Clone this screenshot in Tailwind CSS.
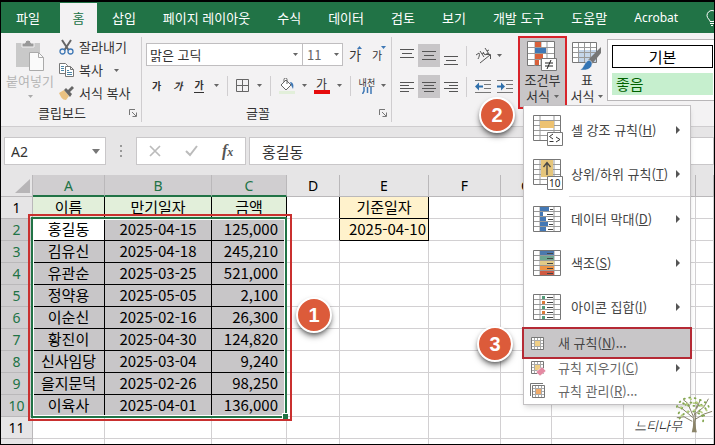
<!DOCTYPE html>
<html lang="ko">
<head>
<meta charset="utf-8">
<meta name="viewport" content="width=device-width, initial-scale=1">
<title>조건부 서식</title>
<script src="https://cdn.jsdelivr.net/npm/@tailwindcss/browser@4"></script>
</head>
<body class="h-screen overflow-hidden bg-white font-['Noto_Sans_CJK_KR',sans-serif] text-[13px] leading-4 text-[#333]">
<svg class="hidden" aria-hidden="true">
  <symbol id="arrow" viewBox="0 0 5 3"><path d="M0 0h5L2.500 3z" fill="#666"/></symbol>
  <symbol id="launcher" viewBox="0 0 8 8"><path d="M.5 6V.5H6M3 3l4 4M7.500 3.500v4h-4" fill="none" stroke="#777"/></symbol>
  <symbol id="grid" viewBox="0 0 28 26"><path d="M.5.5h27v25H.5z" fill="#fff" stroke="#777"/><path d="M7 1v24M21 1v24M1 5.500h26M1 10.500h26M1 15.500h26M1 20.500h26" stroke="#999" fill="none"/></symbol>
  <symbol id="minigrid" viewBox="0 0 13 13"><path d="M.5.5h12v12H.5z" fill="#fff" stroke="#777"/><path d="M3.500 1v11M6.500 1v11M9.500 1v11M1 3.500h11M1 6.500h11M1 9.500h11" stroke="#aaa"/><path d="M4 4h5v5H4z" fill="#f0cf86"/></symbol>
</svg>

<div class="relative flex h-full flex-col overflow-hidden border border-black border-t-2 bg-[#e6e5e6]">
  <nav class="flex h-[31px] shrink-0 items-center bg-[#217346] pl-[15px] whitespace-nowrap text-white">
    <a href="#" class="mr-5">파일</a>
    <a href="#" class="mt-px flex h-[30px] w-[37px] shrink-0 items-center justify-center bg-[#f3f2f3] text-[#217346]" aria-current="page">홈</a>
    <div class="ml-[15px] flex gap-[27px]">
      <a href="#">삽입</a><a href="#">페이지 레이아웃</a><a href="#">수식</a><a href="#">데이터</a><a href="#">검토</a><a href="#">보기</a><a href="#">개발 도구</a><a href="#">도움말</a><a href="#" class="font-['Noto_Sans',sans-serif] text-xs leading-4">Acrobat</a>
      <button aria-label="설명" class="w-[14px] shrink-0"><svg viewBox="0 0 14 16" class="h-4 w-[14px]" fill="none" stroke="#fff"><path d="M5 11.500c0-2-3-3-3-6a5 5 0 0 1 10 0c0 3-3 4-3 6zM5 13.500h4M6 15.500h2"/></svg></button>
    </div>
  </nav>

  <div class="flex h-[94px] shrink-0 overflow-hidden border-b border-[#cfcdcf] bg-[#f3f2f3] py-1 whitespace-nowrap">
    <section class="flex w-[141px] shrink-0 flex-col border-r border-[#cfcdcf]">
      <div class="flex grow">
        <button class="flex w-[54px] flex-col items-center pt-[3px] pl-1 text-[#b5b5b5]">
          <svg class="h-[31px] w-[30px]" viewBox="0 0 30 31"><path d="M1 3h24v24H1z" fill="#c9c9c9"/><path d="M7 7V3h3a3 3 0 0 1 6 0h3v4z" fill="#999" stroke="#f3f2f3"/><path d="M14.500 12.500h9l5 5v13h-14z" fill="#fafafa" stroke="#aaa"/><path d="M23.500 12.500v5h5" fill="none" stroke="#aaa"/></svg>
          <span class="mt-[2px]">붙여넣기</span>
          <svg class="mt-[6px] h-[3px] w-[5px] opacity-50"><use href="#arrow"/></svg>
        </button>
        <div class="flex flex-col gap-[7px] pt-[2px] pl-1">
          <button class="flex items-center gap-[5px]"><svg class="h-4 w-[15px]" viewBox="0 0 15 16" fill="none"><path d="M3 1l6.500 10M12 1L5.500 11" stroke="#666" stroke-width="2"/><circle cx="3.500" cy="12.500" r="2.500" stroke="#3f78b5" stroke-width="1.300"/><circle cx="11.500" cy="12.500" r="2.500" stroke="#3f78b5" stroke-width="1.300"/></svg>잘라내기</button>
          <button class="flex items-center gap-[5px]"><svg class="h-4 w-[15px]" viewBox="0 0 15 16" fill="#fff" stroke="#777"><path d="M.5 1.500h6l2 2v8h-8z"/><path d="M6.500 4.500h5l3 3v7h-8zM11.500 4.500v3h3"/><path d="M2 4.500h3M2 6.500h3M2 8.500h3M8 8.500h2M8 10.500h5M8 12.500h5" stroke="#4d86a8"/></svg>복사<svg class="ml-[6px] h-[3px] w-[5px]"><use href="#arrow"/></svg></button>
          <button class="flex items-center gap-[5px]"><svg class="h-4 w-[15px]" viewBox="0 0 15 16"><path d="M0 8l5-3 5 6-3 4c-4 0-5-3-7-7z" fill="#eac282"/><path d="M5 5l2-2 2 2 4-4 2 2-4 4 2 2-2 3z" fill="#666"/></svg>서식 복사</button>
        </div>
      </div>
      <div class="flex items-center pb-px pl-[37px]"><span class="grow">클립보드</span><button aria-label="클립보드 옵션" class="mr-1"><svg class="h-2 w-2"><use href="#launcher"/></svg></button></div>
    </section>

    <section class="flex w-[250px] shrink-0 flex-col border-r border-[#cfcdcf]">
      <div class="flex items-center pt-[6px] pl-1">
        <div class="relative"><select aria-label="글꼴" class="h-[23px] w-[157px] appearance-none border border-[#c0bec0] bg-white pl-[3px] text-[13px] leading-4"><option>맑은 고딕</option></select><svg class="pointer-events-none absolute top-[10px] right-[5px] h-[3px] w-[5px]"><use href="#arrow"/></svg></div>
        <div class="relative"><select aria-label="글꼴 크기" class="h-[23px] w-10 appearance-none border border-l-0 border-[#c0bec0] bg-white pl-1 text-[13px] leading-4 text-[#666]"><option>11</option></select><svg class="pointer-events-none absolute top-[10px] right-1 h-[3px] w-[5px]"><use href="#arrow"/></svg></div>
        <button class="relative ml-[6px] text-[13px]">가<svg class="absolute -top-px -right-px h-[3px] w-[5px]" viewBox="0 0 5 3"><path d="M0 3h5L2.500 0z" fill="#3f78b5"/></svg></button>
        <button class="relative ml-[11px] text-[11px]">가<svg class="absolute -top-px -right-1 h-[3px] w-[5px]" viewBox="0 0 5 3"><path d="M0 0h5L2.500 3z" fill="#3f78b5"/></svg></button>
      </div>
      <div class="flex grow items-center pl-[10px] text-[10px]">
        <button class="font-bold">가</button>
        <button class="ml-3 font-bold italic">가</button>
        <button class="ml-3 border-b border-[#333] font-bold leading-[14px]">가</button>
        <svg class="ml-[10px] h-[3px] w-[5px]"><use href="#arrow"/></svg>
        <span class="ml-2 h-5 w-px bg-[#d0ced0]"></span>
        <button aria-label="테두리" class="ml-2"><svg class="h-[13px] w-[13px]" viewBox="0 0 13 13" fill="none" stroke="#666"><path d="M.5.5h12v12H.5zM6.500 0v13M0 6.500h13"/></svg></button>
        <svg class="ml-2 h-[3px] w-[5px]"><use href="#arrow"/></svg>
        <span class="ml-2 h-5 w-px bg-[#d0ced0]"></span>
        <button aria-label="채우기 색" class="ml-2"><svg class="h-4 w-4" viewBox="0 0 16 16"><path d="M2 7l5-5 5 5-5 5zM5 4V1.500a1.500 1.500 0 0 1 3 0V6" fill="#fff" stroke="#666"/><path d="M11 4c3 0 4 3 3 7l-2-4z" fill="#3f78b5"/><path d="M0 13h16v3H0z" fill="#e2efda"/></svg></button>
        <svg class="ml-[7px] h-[3px] w-[5px]"><use href="#arrow"/></svg>
        <button class="ml-[7px] w-4 border-b-4 border-[#e60c0c] text-xs leading-[13px]">가</button>
        <svg class="ml-[7px] h-[3px] w-[5px]"><use href="#arrow"/></svg>
        <span class="ml-2 h-5 w-px bg-[#d0ced0]"></span>
        <button class="ml-2 flex flex-col items-center text-[9px] leading-[9px]">내천<svg class="h-[7px] w-[10px]" viewBox="0 0 10 7" fill="none" stroke="#3f78b5" stroke-width="1.500"><path d="M2 0v4l-1.500 3M5.500 0v6M9 0v7"/></svg></button>
        <svg class="ml-[6px] h-[3px] w-[5px]"><use href="#arrow"/></svg>
      </div>
      <div class="flex items-center pb-px pl-[104px]"><span class="grow">글꼴</span><button aria-label="글꼴 옵션" class="mr-1"><svg class="h-2 w-2"><use href="#launcher"/></svg></button></div>
    </section>

    <section class="flex w-[126px] shrink-0 flex-col gap-[8px] pt-[7px] pl-[4px]">
      <div class="flex h-[23px] items-center">
        <button aria-label="위쪽 맞춤" class="flex h-full w-[22px] items-center justify-center"><svg class="h-5 w-[14px]" viewBox="0 0 14 20" stroke="#555"><path d="M0 3.500h14M2 7.500h10M0 11.500h14"/></svg></button>
        <button aria-label="가운데 맞춤" class="flex h-full w-[22px] items-center justify-center bg-[#c8c6c8]"><svg class="h-5 w-[14px]" viewBox="0 0 14 20" stroke="#555"><path d="M0 5.500h14M2 9.500h10M0 13.500h14"/></svg></button>
        <button aria-label="아래쪽 맞춤" class="flex h-full w-[22px] items-center justify-center"><svg class="h-5 w-[14px]" viewBox="0 0 14 20" stroke="#555"><path d="M0 10.500h14M2 14.500h10M0 18.500h14"/></svg></button>
        <span class="ml-1 h-5 w-px bg-[#d0ced0]"></span>
        <button aria-label="방향" class="ml-2 flex items-center gap-[5px]"><svg class="h-[18px] w-[17px] overflow-visible" viewBox="0 0 17 18" fill="none" stroke="#555"><path d="M1 8l3-2c1 2 0 4-1 6M5 4l4 6M7 7l2-1M8 5l2 3 3-2M10 1l4 6M12 4l2-1"/><path d="M5 16L15 8M11 7.500h4.500V12"/></svg><svg class="h-[3px] w-[5px]"><use href="#arrow"/></svg></button>
      </div>
      <div class="flex h-[23px] items-center">
        <button aria-label="왼쪽 맞춤" class="flex h-full w-[22px] items-center justify-center"><svg class="h-3 w-[14px]" viewBox="0 0 14 12" stroke="#555"><path d="M0 1.500h14M0 4.500h9M0 7.500h14M0 10.500h9"/></svg></button>
        <button aria-label="가로 가운데 맞춤" class="flex h-full w-[22px] items-center justify-center bg-[#c8c6c8]"><svg class="h-3 w-[14px]" viewBox="0 0 14 12" stroke="#555"><path d="M0 1.500h14M2 4.500h10M0 7.500h14M2 10.500h10"/></svg></button>
        <button aria-label="오른쪽 맞춤" class="flex h-full w-[22px] items-center justify-center"><svg class="h-3 w-[14px]" viewBox="0 0 14 12" stroke="#555"><path d="M0 1.500h14M5 4.500h9M0 7.500h14M5 10.500h9"/></svg></button>
        <span class="ml-1 h-5 w-px bg-[#d0ced0]"></span>
        <button aria-label="내어쓰기" class="ml-2"><svg class="h-[13px] w-4" viewBox="0 0 16 13"><path d="M0 .5h16M9 4.500h7M9 8.500h7M0 12.500h16" stroke="#777"/><path d="M0 6.500l4-4v3h4v2H4v3z" fill="#2f6fab"/></svg></button>
        <button aria-label="들여쓰기" class="ml-[6px]"><svg class="h-[13px] w-4" viewBox="0 0 16 13"><path d="M0 .5h16M9 4.500h7M9 8.500h7M0 12.500h16" stroke="#777"/><path d="M8 6.500l-4-4v3H0v2h4v3z" fill="#2f6fab"/></svg></button>
      </div>
    </section>

    <button aria-expanded="true" class="-mt-px flex h-[73px] w-[49px] shrink-0 flex-col items-center border-2 border-[#d8232a] bg-[#c8c6c8] pt-[3px]">
      <svg class="h-[30px] w-[31px] shrink-0" viewBox="0 0 31 30"><path d="M.5.500h27v24H.5z" fill="#fff" stroke="#777"/><path d="M8 1v24M14 1v24M20 1v24M1 6.500h26M1 12.500h26M1 18.500h26" stroke="#999"/><path d="M8 1h6v5H8zM8 13h8v5H8zM8 19h4v5H8z" fill="#d9603a"/><path d="M8 7h11v5H8z" fill="#3f78b5"/><path d="M14.500 17.500h15v12h-15z" fill="#fff" stroke="#777"/><path d="M18 22h8M18 25h8M24 19l-4 9" stroke="#222"/></svg>
      <span class="mt-px">조건부</span><span class="flex items-center gap-1">서식<svg class="h-[3px] w-[5px]"><use href="#arrow"/></svg></span>
    </button>
    <button class="flex w-[40px] shrink-0 flex-col items-center pt-1">
      <svg class="h-[30px] w-[30px] shrink-0" viewBox="0 0 30 30"><path d="M.5 1.500h24v20H.5z" fill="#fff" stroke="#777"/><path d="M7 9h17v12H7z" fill="#c5d6ea"/><path d="M6.500 2v19M12.500 2v19M18.500 2v19M1 6.500h23M1 11.500h23M1 16.500h23" stroke="#999"/><path d="M29 6v6l-9 11-4-4z" fill="#777"/><path d="M17 19c3 1 4 4 2 7-3 4-8 3-11 3 4-2 4-8 9-10z" fill="#3475b5" stroke="#f3f2f3" stroke-width=".6"/></svg>
      <span class="mt-px">표</span><span class="flex items-center gap-1">서식<svg class="h-[3px] w-[5px]"><use href="#arrow"/></svg></span>
    </button>
    <div class="mt-[2px] flex h-[62px] min-w-[108px] grow flex-col gap-[5px] border border-r-0 border-[#b8b6b8] bg-white p-1 pt-[5px] pr-[2px] text-[15px]">
      <button class="flex h-[23px] shrink-0 items-center justify-center border border-black leading-5 text-black">기본</button>
      <button class="flex h-[22px] shrink-0 items-center bg-[#c6efce] pl-1 leading-5 text-[#006100]">좋음</button>
    </div>
  </div>

  <div class="flex h-[48px] shrink-0 items-center pl-[3px]">
    <div class="relative"><input aria-label="이름 상자" value="A2" class="h-[28px] w-[102px] border border-[#c9c7c9] bg-white pl-[6px] font-['Noto_Sans',sans-serif] text-sm"><svg class="pointer-events-none absolute top-3 right-[6px] h-[5px] w-2" viewBox="0 0 5 3"><path d="M0 0h5L2.500 3z" fill="#777"/></svg></div>
    <svg class="ml-[14px] h-3 w-[2px]" viewBox="0 0 2 12" fill="#999"><path d="M0 0h2v2H0zM0 5h2v2H0zM0 10h2v2H0z"/></svg>
    <div class="ml-[14px] flex h-[28px] w-[110px] items-center border border-[#c9c7c9] bg-white pl-3">
      <button aria-label="취소"><svg class="h-3 w-3" viewBox="0 0 12 12"><path d="M1 1l10 10M11 1L1 11" stroke="#bbb" stroke-width="1.700"/></svg></button>
      <button aria-label="입력" class="ml-6"><svg class="h-3 w-[13px]" viewBox="0 0 13 12"><path d="M1 6l4 4 7-9" fill="none" stroke="#bbb" stroke-width="2"/></svg></button>
      <button class="ml-6 font-['Liberation_Serif',serif] text-base leading-4 font-bold text-[#555] italic">f<span class="text-xs">x</span></button>
    </div>
    <input aria-label="수식 입력줄" value="홍길동" class="ml-[3px] h-[28px] min-w-0 grow border border-[#c9c7c9] bg-white pl-3 text-[15px]">
  </div>

  <main class="relative grow overflow-hidden bg-white">
    <table class="w-full table-fixed border-separate border-spacing-0 text-center text-[15px] leading-[19px] text-black [&_td]:h-[22px] [&_td]:border-r [&_td]:border-b [&_td]:border-[#d2d0d2] [&_td]:p-0 [&_td]:align-top [&_th]:h-[22px] [&_th]:border-r [&_th]:border-b [&_th]:border-[#bab8ba] [&_th]:p-0 [&_th]:font-['Noto_Sans',sans-serif] [&_th]:text-sm [&_th]:leading-[19px] [&_th]:font-normal">
      <colgroup><col class="w-8"><col class="w-[72px]"><col class="w-[107px]"><col class="w-[75px]"><col class="w-[53px]"><col class="w-[89px]"><col class="w-[72px]"><col class="w-[51px]"><col class="w-[72px]"><col class="w-[72px]"><col></colgroup>
      <thead><tr class="bg-[#e6e5e6] [&_.on]:border-b-2 [&_.on]:border-b-[#217346] [&_.on]:bg-[#d0ced0] [&_.on]:text-[#217346]">
        <th aria-label="모두 선택"><svg class="ml-[14px] h-[14px] w-[15px]" viewBox="0 0 15 14"><path d="M15 0v14H0z" fill="#b7b5b7"/></svg></th>
        <th scope="col" class="on">A</th><th scope="col" class="on">B</th><th scope="col" class="on">C</th><th scope="col">D</th><th scope="col">E</th><th scope="col">F</th><th scope="col">G</th><th scope="col" aria-label="H"></th><th scope="col" aria-label="I"></th><th></th>
      </tr></thead>
      <tbody class="[&_th]:bg-[#e6e5e6] [&_.h]:border-black! [&_.h]:bg-[#e2efda] [&_.s]:border-black! [&_.s]:bg-[#c8c6c8] [&_.n]:pr-2! [&_.n]:text-right [&_.y]:border-black! [&_.y]:bg-[#fff2cc] [&_.d]:border-r-black! [&_.g]:bg-[#d0ced0]! [&_.g]:text-[#217346]">
        <tr><th scope="row">1</th><td class="h">이름</td><td class="h">만기일자</td><td class="h">금액</td><td class="d"></td><td class="y">기준일자</td><td></td><td></td><td></td><td></td><td></td></tr>
        <tr><th scope="row" class="g">2</th><td class="s bg-white!">홍길동</td><td class="s">2025-04-15</td><td class="s n">125,000</td><td class="d"></td><td class="y pr-[2px]! text-right">2025-04-10</td><td></td><td></td><td></td><td></td><td></td></tr>
        <tr><th scope="row" class="g">3</th><td class="s">김유신</td><td class="s">2025-04-18</td><td class="s n">245,210</td><td></td><td></td><td></td><td></td><td></td><td></td><td></td></tr>
        <tr><th scope="row" class="g">4</th><td class="s">유관순</td><td class="s">2025-03-25</td><td class="s n">521,000</td><td></td><td></td><td></td><td></td><td></td><td></td><td></td></tr>
        <tr><th scope="row" class="g">5</th><td class="s">정약용</td><td class="s">2025-05-05</td><td class="s n">2,100</td><td></td><td></td><td></td><td></td><td></td><td></td><td></td></tr>
        <tr><th scope="row" class="g">6</th><td class="s">이순신</td><td class="s">2025-02-16</td><td class="s n">26,300</td><td></td><td></td><td></td><td></td><td></td><td></td><td></td></tr>
        <tr><th scope="row" class="g">7</th><td class="s">황진이</td><td class="s">2025-04-30</td><td class="s n">124,820</td><td></td><td></td><td></td><td></td><td></td><td></td><td></td></tr>
        <tr><th scope="row" class="g">8</th><td class="s">신사임당</td><td class="s">2025-03-04</td><td class="s n">9,240</td><td></td><td></td><td></td><td></td><td></td><td></td><td></td></tr>
        <tr><th scope="row" class="g">9</th><td class="s">을지문덕</td><td class="s">2025-02-26</td><td class="s n">98,250</td><td></td><td></td><td></td><td></td><td></td><td></td><td></td></tr>
        <tr><th scope="row" class="g">10</th><td class="s">이육사</td><td class="s">2025-04-01</td><td class="s n">136,000</td><td></td><td></td><td></td><td></td><td></td><td></td><td></td></tr>
        <tr><th scope="row">11</th><td></td><td></td><td></td><td></td><td></td><td></td><td></td><td></td><td></td><td></td></tr>
        <tr><th></th><td></td><td></td><td></td><td></td><td></td><td></td><td></td><td></td><td></td><td></td></tr>
      </tbody>
    </table>
    <div class="pointer-events-none absolute top-[42px] left-[30px] h-[201px] w-[256px] border-2 border-[#217346] shadow-[inset_0_0_0_1px_white]"><span class="absolute -right-[3px] -bottom-[3px] h-[6px] w-[6px] border-t border-l border-white bg-[#217346]"></span></div>
    <div class="pointer-events-none absolute top-[39px] left-[27px] h-[207px] w-[264px] border-2 border-[#c9302f]"></div>
  </main>

  <div role="menu" class="absolute top-[103px] left-[522px] flex w-[168px] flex-col border border-[#c3c1c3] bg-white pt-[2px] whitespace-nowrap text-[#444] shadow-md">
    <button role="menuitem" class="flex h-11 items-center pr-[10px] pl-[9px]"><svg class="h-[31px] w-[30px] shrink-0" viewBox="0 0 30 31"><use href="#grid" width="28" height="26"/><path d="M7 6h14v7H7z" fill="#edc271"/><path d="M14.500 17.500h15v13h-15z" fill="#fff" stroke="#777"/><path d="M20 19l-3.500 2.500L20 24M16.500 26.500h4M23 22l4 2.500-4 2.500" fill="none" stroke="#333"/></svg><span class="ml-2 grow text-left">셀 강조 규칙(<u>H</u>)</span><svg class="h-2 w-1" viewBox="0 0 4 8"><path d="M0 0l4 4-4 4z" fill="#555"/></svg></button>
    <button role="menuitem" class="flex h-11 items-center pr-[10px] pl-[9px]"><svg class="h-[31px] w-[30px] shrink-0" viewBox="0 0 30 31"><use href="#grid" width="28" height="26"/><path d="M8 1h12v17H8z" fill="#e5c57b"/><path d="M14 16V4M10.500 8L14 3.500 17.500 8" fill="none" stroke="#444" stroke-width="1.300"/><path d="M14.500 17.500h15v13h-15z" fill="#fff" stroke="#777"/><text x="16" y="28" font-size="10" font-family="Noto Sans" fill="#222">10</text></svg><span class="ml-2 grow text-left">상위/하위 규칙(<u>T</u>)</span><svg class="h-2 w-1" viewBox="0 0 4 8"><path d="M0 0l4 4-4 4z" fill="#555"/></svg></button>
    <hr class="ml-[45px] border-[#dad8da]">
    <button role="menuitem" class="flex h-11 items-center pr-[10px] pl-[9px]"><svg class="h-[26px] w-[30px] shrink-0" viewBox="0 0 30 26"><use href="#grid" width="28" height="26"/><path d="M7 1h9v4H7zM7 6h3v4H7zM7 11h6v4H7zM7 16h8v4H7zM7 21h6v4H7z" fill="#4478b5"/><path d="M17 3.500h3M14 8.500h6M15 13.500h5M16 18.500h4M15 23.500h5" stroke="#444"/></svg><span class="ml-2 grow text-left">데이터 막대(<u>D</u>)</span><svg class="h-2 w-1" viewBox="0 0 4 8"><path d="M0 0l4 4-4 4z" fill="#555"/></svg></button>
    <button role="menuitem" class="flex h-11 items-center pr-[10px] pl-[9px]"><svg class="h-[26px] w-[30px] shrink-0" viewBox="0 0 30 26"><use href="#grid" width="28" height="26"/><path d="M7 1h14v4H7z" fill="#4c79ad"/><path d="M7 6h14v4H7z" fill="#6da690"/><path d="M7 11h14v4H7z" fill="#e3cb87"/><path d="M7 16h14v4H7z" fill="#ee9445"/><path d="M7 21h14v4H7z" fill="#d05a42"/><path d="M14 3.500h6M14 8.500h6M14 13.500h6M14 18.500h6M14 23.500h6" stroke="#444"/></svg><span class="ml-2 grow text-left">색조(<u>S</u>)</span><svg class="h-2 w-1" viewBox="0 0 4 8"><path d="M0 0l4 4-4 4z" fill="#555"/></svg></button>
    <button role="menuitem" class="flex h-11 items-center pr-[10px] pl-[9px]"><svg class="h-[26px] w-[30px] shrink-0" viewBox="0 0 30 26"><use href="#grid" width="28" height="26"/><path d="M9 2h3v3H9zM9 12h3v3H9zM9 22h3v3H9z" fill="#529b79"/><path d="M9 7h3v3H9zM9 17h3v3H9z" fill="#dd7d3b"/><path d="M14 3.500h6M14 8.500h6M14 13.500h6M14 18.500h6M14 23.500h6" stroke="#444"/></svg><span class="ml-2 grow text-left">아이콘 집합(<u>I</u>)</span><svg class="h-2 w-1" viewBox="0 0 4 8"><path d="M0 0l4 4-4 4z" fill="#555"/></svg></button>
    <button role="menuitem" class="-mx-[2px] -mt-[2px] flex h-8 items-center border-2 border-[#b52a35] bg-[#c8c6c8] pl-[7px]"><svg class="h-[13px] w-[13px]"><use href="#minigrid"/></svg><span class="ml-[14px]">새 규칙(<u>N</u>)...</span></button>
    <button role="menuitem" class="flex h-[18px] items-center pr-[10px] pl-[7px] text-[#666]"><svg class="h-[15px] w-[15px]" viewBox="0 0 15 15"><use href="#minigrid" width="13" height="13"/><path d="M5 11l6-5 4 4-6 5z" fill="#e48aa2" stroke="#fff" stroke-width=".5"/></svg><span class="ml-3 grow text-left">규칙 지우기(<u>C</u>)</span><svg class="h-2 w-1" viewBox="0 0 4 8"><path d="M0 0l4 4-4 4z" fill="#555"/></svg></button>
    <button role="menuitem" class="flex h-[27px] items-center pl-[6px] text-[#666]"><svg class="h-[15px] w-[15px]" viewBox="0 0 15 15"><path d="M.5 13V.5H13" fill="none" stroke="#777"/><use href="#minigrid" x="2" y="2" width="13" height="13"/><path d="M6 6h5v5H6z" fill="#f1ab6a"/></svg><span class="ml-[13px]">규칙 관리(<u>R</u>)...</span></button>
  </div>

  <span class="absolute top-[95px] left-[478px] flex h-9 w-9 items-center justify-center rounded-full border-2 border-white bg-[#dc5b3a] font-['Liberation_Sans',sans-serif] text-xl font-bold text-white shadow-md shadow-black/50">2</span>
  <span class="absolute top-[295px] left-[295px] flex h-9 w-9 items-center justify-center rounded-full border-2 border-white bg-[#dc5b3a] font-['Liberation_Sans',sans-serif] text-xl font-bold text-white shadow-md shadow-black/50">1</span>
  <span class="absolute top-[324px] left-[476px] flex h-9 w-9 items-center justify-center rounded-full border-2 border-white bg-[#dc5b3a] font-['Liberation_Sans',sans-serif] text-xl font-bold text-white shadow-md shadow-black/50">3</span>

  <div class="absolute right-0 bottom-[10px] flex items-end">
    <span class="text-[13px] font-light text-black italic">느티나무</span>
    <svg class="-ml-[8px] h-[38px] w-[40px]" viewBox="0 0 42 42" fill="none"><path d="M19 40c3-7 1-12 2-18l4-14M23 40c-2-8 0-15 0-20M20 24L8 14 3 12M20 22l-6-14-5-4M22 20l10-8 5-9M22 26l10-6 9-3M19 28l-9-5-8 1M24 14l4-10" stroke="#7a745c" stroke-width="1"/><path d="M19 40l2-17 3 17z" fill="#8b8468"/><g stroke="#84a650" stroke-width="2" stroke-linecap="round" stroke-dasharray="1 5"><path d="M2 12C6 2 16 0 24 3s12 4 14 11M4 19c5-9 12-14 21-11s10 9 12 10M5 25c4-6 10-9 15-8s10 5 15 5M9 8c9 6 14 1 21 3M27 16c2 5 5 8 4 12"/></g><g stroke="#b9cf82" stroke-width="2" stroke-linecap="round" stroke-dasharray="1 7"><path d="M6 13c8-8 20-7 29 3M7 22c8-8 18-9 28 0M17 3l14 8"/></g></svg>
  </div>
</div>
</body>
</html>
